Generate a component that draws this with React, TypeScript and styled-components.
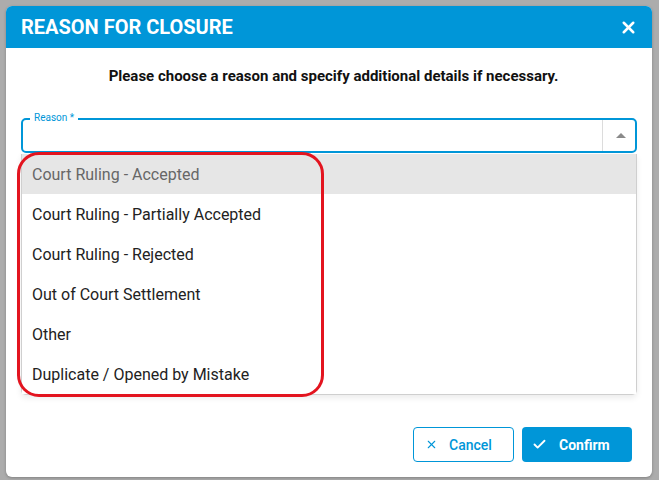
import styled, { createGlobalStyle } from 'styled-components';
import { X, Check } from 'lucide-react';

const reasons = [
    'Court Ruling - Accepted',
    'Court Ruling - Partially Accepted',
    'Court Ruling - Rejected',
    'Out of Court Settlement',
    'Other',
    'Duplicate / Opened by Mistake',
];

export default function App() {
    return (
        <>
            <GlobalStyle />
            <Backdrop>
                <Dialog>
                    <Header>
                        <Title>REASON FOR CLOSURE</Title>
                        <CloseButton>
                            <X size={19} strokeWidth={3.2} />
                        </CloseButton>
                    </Header>
                    <Body>
                        <Intro>Please choose a reason and specify additional details if necessary.</Intro>
                        <Field>
                            <Legend>Reason *</Legend>
                            <Input />
                            <ArrowBox>
                                <Arrow />
                            </ArrowBox>
                            <Menu>
                                {reasons.map((r, i) => (
                                    <Option key={r} active={i === 0}>
                                        {r}
                                    </Option>
                                ))}
                                <Highlight />
                            </Menu>
                        </Field>
                    </Body>
                    <Footer>
                        <OutlineButton>
                            <X size={13} strokeWidth={2} />
                            Cancel
                        </OutlineButton>
                        <FilledButton>
                            <Check size={15} strokeWidth={3} />
                            Confirm
                        </FilledButton>
                    </Footer>
                </Dialog>
            </Backdrop>
        </>
    );
}

const GlobalStyle = createGlobalStyle`
    html, body {
        margin: 0;
        padding: 0;
        background: #acacac;
        font-family: Roboto, "Liberation Sans", sans-serif;
    }
`;

const Backdrop = styled.div`
    width: 659px;
    height: 480px;
    box-sizing: border-box;
    padding: 6px 7px 3px 6px;
    display: flex;
`;

const Dialog = styled.div`
    flex: 1;
    display: flex;
    flex-direction: column;
    background: #fff;
    border-radius: 6px;
    box-shadow: 0 1px 3px rgba(0, 0, 0, 0.25);
`;

const Header = styled.div`
    height: 42px;
    flex: none;
    display: flex;
    align-items: center;
    justify-content: space-between;
    padding: 0 14px 0 15px;
    background: #0096d8;
    border-radius: 6px 6px 0 0;
`;

const Title = styled.div`
    color: #fff;
    font-size: 20px;
    font-weight: 700;
`;

const CloseButton = styled.div`
    color: #fff;
    display: flex;
    align-items: center;
`;

const Body = styled.div`
    padding: 19px 15px 0 15px;
`;

const Intro = styled.div`
    text-align: center;
    font-size: 15px;
    font-weight: 700;
    line-height: 18px;
    color: #111;
    padding-left: 9px;
`;

const Field = styled.div`
    position: relative;
    margin-top: 33px;
    height: 35px;
    box-sizing: border-box;
    border: 2px solid #0096d8;
    border-radius: 5px;
    display: flex;
`;

const Legend = styled.span`
    position: absolute;
    top: -8px;
    left: 7px;
    padding: 0 4px 0 4px;
    background: #fff;
    color: #0096d8;
    font-size: 10px;
    line-height: 12px;
`;

const Input = styled.div`
    flex: 1;
`;

const ArrowBox = styled.div`
    width: 32px;
    border-left: 1px solid #dcdcdc;
    display: flex;
    align-items: center;
    justify-content: center;
`;

const Arrow = styled.div`
    width: 0;
    height: 0;
    margin-left: 3px;
    border-left: 5px solid transparent;
    border-right: 5px solid transparent;
    border-bottom: 5px solid #8a8a8a;
`;

const Menu = styled.div`
    position: absolute;
    top: 34px;
    left: -2px;
    right: -2px;
    background: #fff;
    border: 1px solid #cfcfcf;
    border-top: none;
    border-radius: 0 0 5px 5px;
    box-shadow: 0 3px 6px rgba(0, 0, 0, 0.08);
    z-index: 2;
`;

const Option = styled.div<{ active?: boolean }>`
    height: 40px;
    display: flex;
    align-items: center;
    padding-left: 10px;
    font-size: 16px;
    color: ${({ active }) => (active ? '#676767' : '#222')};
    background: ${({ active }) => (active ? '#e6e6e6' : '#fff')};
`;

const Highlight = styled.div`
    position: absolute;
    left: -5px;
    top: -2px;
    width: 307px;
    height: 245px;
    box-sizing: border-box;
    border: 3px solid #e3141f;
    border-radius: 22px;
    pointer-events: none;
`;

const Footer = styled.div`
    margin-top: auto;
    display: flex;
    justify-content: flex-end;
    gap: 8px;
    padding: 0 20px 15px 0;
`;

const BaseButton = styled.button`
    height: 35px;
    box-sizing: border-box;
    border-radius: 4px;
    display: flex;
    align-items: center;
    font-family: Roboto, "Liberation Sans", sans-serif;
    font-size: 14px;
    cursor: pointer;
`;

const OutlineButton = styled(BaseButton)`
    width: 101px;
    padding: 0 0 0 11px;
    gap: 11px;
    background: #fff;
    border: 1px solid #0096d8;
    color: #0096d8;
    font-weight: 500;
`;

const FilledButton = styled(BaseButton)`
    width: 110px;
    padding: 0 0 0 10px;
    gap: 12px;
    background: #0096d8;
    border: none;
    color: #fff;
    font-weight: 700;
`;
